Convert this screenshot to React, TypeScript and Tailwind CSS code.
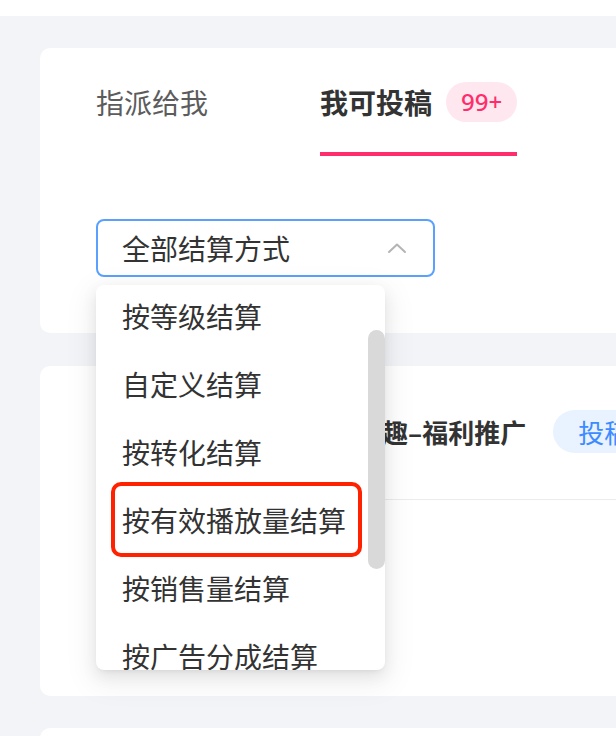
const items = ['按等级结算', '自定义结算', '按转化结算', '按有效播放量结算', '按销售量结算', '按广告分成结算'];

function ChevronUp() {
  return (
    <svg width="20" height="12" viewBox="0 0 20 12" fill="none">
      <polyline points="2,10 10,2.5 18,10" stroke="#b4b4b4" strokeWidth="2" strokeLinecap="round" strokeLinejoin="round" />
    </svg>
  );
}

export default function App() {
  return (
    <div className="relative w-[616px] h-[736px] overflow-hidden bg-[#f3f4f7] font-['Noto_Sans_CJK_SC','Noto_Sans',sans-serif]">
      <div className="h-4 bg-white" />

      {/* filter card */}
      <div className="mt-8 ml-10 rounded-l-[10px] bg-white pl-14 pt-[34px] pb-14">
        <div className="flex gap-[112px]">
          <div className="flex flex-col">
            <div className="h-10 flex items-center text-[28px] leading-none text-[#5c5c5c]">指派给我</div>
            <div className="mt-[30px] h-1" />
          </div>
          <div className="flex flex-col">
            <div className="h-10 flex items-center">
              <span className="text-[28px] leading-none font-semibold text-[#333]">我可投稿</span>
              <span className="ml-[14px] w-[71px] h-10 rounded-full bg-[#ffe7ef] flex items-center justify-center text-[24px] leading-none font-medium text-[#ff2d6b] font-['Noto_Sans',sans-serif]">99+</span>
            </div>
            <div className="mt-[30px] h-1 bg-[#ff2d6b]" />
          </div>
        </div>
        <div className="mt-[63px] w-[339px] h-[58px] rounded-lg border-2 border-[#5aa0ff] flex items-center justify-between pl-6 pr-[26px]">
          <span className="text-[28px] leading-none text-[#333]">全部结算方式</span>
          <ChevronUp />
        </div>
      </div>

      {/* task card */}
      <div className="mt-[33px] ml-10 h-[330px] rounded-l-[10px] bg-white pl-14 pt-11">
        <div className="flex items-center h-[43px]">
          <span className="text-[26px] leading-none font-bold text-[#333] whitespace-nowrap">夏日狂欢季游戏达人享乐趣–福利推广</span>
          <span className="ml-[27px] h-[43px] pl-[25px] pr-6 rounded-full bg-[#e8f3ff] flex items-center text-[26px] leading-none text-[#3d8bff] whitespace-nowrap">投稿中</span>
        </div>
        <div className="mt-[46px] h-px bg-[#ececec]" />
      </div>

      <div className="mt-8 ml-10 h-20 rounded-l-[10px] bg-white" />

      {/* dropdown */}
      <div className="absolute left-[96px] top-[285px] w-[289px] h-[385px] overflow-hidden rounded-lg bg-white shadow-[0_6px_16px_rgba(0,0,0,0.08),0_3px_6px_-4px_rgba(0,0,0,0.12),0_9px_28px_8px_rgba(0,0,0,0.05)]">
        <div className="-mt-[3px]">
          {items.map(t => (
            <div key={t} className="h-[68px] flex items-center pl-[26px] text-[28px] leading-none text-[#333] whitespace-nowrap">{t}</div>
          ))}
        </div>
        <div className="absolute right-0 top-[45px] w-[17px] h-[239px] rounded-full bg-[#d9d9d9]" />
      </div>

      {/* highlight */}
      <div className="absolute left-[111px] top-[482px] w-[251px] h-[75px] rounded-[10px] border-4 border-[#ff2200]" />
    </div>
  );
}
